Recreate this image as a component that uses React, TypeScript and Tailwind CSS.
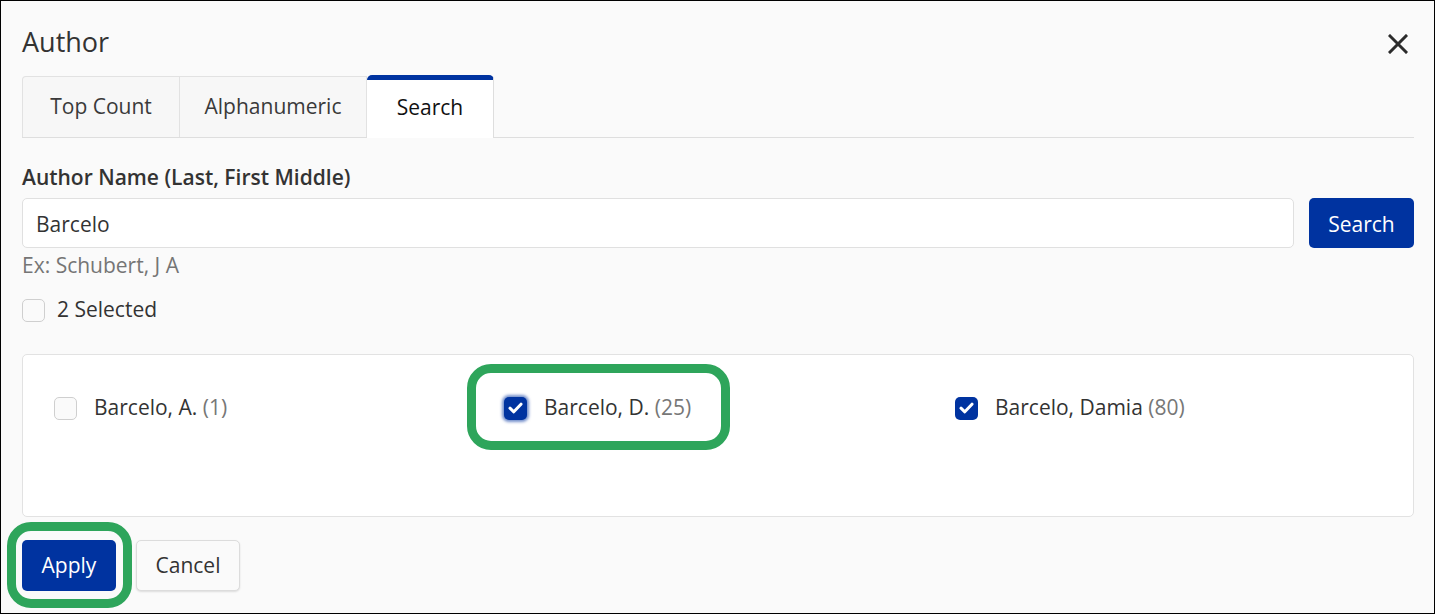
import React from 'react';

const font = { fontFamily: '"Open Sans", "Noto Sans", sans-serif' };

type Author = { name: string; count: number; checked: boolean; focused?: boolean };

const authors: Author[] = [
  { name: 'Barcelo, A.', count: 1, checked: false },
  { name: 'Barcelo, D.', count: 25, checked: true, focused: true },
  { name: 'Barcelo, Damia', count: 80, checked: true },
];

function Checkbox({ checked, focused }: { checked: boolean; focused?: boolean }) {
  if (!checked) {
    return <span className="block h-[23px] w-[23px] shrink-0 rounded-[5px] border border-[#cfcfcf] bg-[#fafafa]" />;
  }
  return (
    <span
      className={`flex h-[23px] w-[23px] shrink-0 items-center justify-center rounded-[5px] bg-[#0033a0] ${
        focused ? 'shadow-[0_0_3px_2px_rgba(0,51,160,0.55)]' : ''
      }`}
    >
      <svg width="15" height="12" viewBox="0 0 15 12" fill="none">
        <path d="M2 6.2 L5.8 9.8 L13 2.2" stroke="white" strokeWidth="3" strokeLinecap="round" strokeLinejoin="round" />
      </svg>
    </span>
  );
}

export default function App() {
  return (
    <div
      style={font}
      className="relative box-border h-[614px] w-[1435px] overflow-hidden border border-black bg-[#fafafa] pl-[21px] pr-[20px] text-[#333]"
    >
      {/* header */}
      <div className="flex h-[74px] items-start justify-between pt-[22px]">
        <h1 className="text-[27px] leading-[38px] font-normal text-[#333]">Author</h1>
        <button className="mr-[6px] mt-[11px]">
          <svg width="20" height="20" viewBox="0 0 20 20">
            <path d="M2 2 L18 18 M18 2 L2 18" stroke="#2b2b2b" strokeWidth="3" strokeLinecap="square" />
          </svg>
        </button>
      </div>

      {/* tabs */}
      <div className="flex h-[63px] border-b border-[#dedede]">
        <div className="mt-[1px] flex w-[158px] items-center justify-center rounded-tl-[4px] border border-b-0 border-[#e2e2e2] bg-[#f7f7f7] text-[21px] text-[#3a3a3a]">
          Top Count
        </div>
        <div className="mt-[1px] flex w-[187px] items-center justify-center border-t border-r border-[#e2e2e2] bg-[#f7f7f7] text-[21px] text-[#3a3a3a]">
          Alphanumeric
        </div>
        <div className="relative -mb-px flex w-[127px] items-center justify-center rounded-t-[5px] border-t-[5px] border-r border-t-[#0033a0] border-r-[#dedede] bg-white pb-[3px] text-[21px] font-medium text-[#111]">
          Search
        </div>
      </div>

      {/* search form */}
      <label className="mt-[25px] block text-[21px] leading-[28px] font-semibold text-[#333]">
        Author Name (Last, First Middle)
      </label>
      <div className="mt-[7px] flex gap-[15px]">
        <div className="flex h-[50px] flex-1 items-center rounded-[5px] border border-[#e0e0e0] bg-white px-[13px] pt-[3px] text-[21px] text-[#333]">
          Barcelo
        </div>
        <button className="h-[50px] w-[105px] rounded-[5px] bg-[#0033a0] pt-[3px] text-[21px] text-white">Search</button>
      </div>
      <p className="mt-[4px] text-[21px] leading-[26px] text-[#757575]">Ex: Schubert, J A</p>

      <div className="mt-[20px] flex h-[24px] items-center gap-[12px]">
        <Checkbox checked={false} />
        <span className="text-[21px] text-[#333]">2 Selected</span>
      </div>

      {/* results */}
      <div className="mt-[32px] h-[163px] rounded-[5px] border border-[#e2e2e2] bg-white pl-[31px] pt-[41px]">
        <div className="grid grid-cols-[450px_451px_450px]">
          {authors.map((a) => (
            <div key={a.name} className="flex h-[24px] items-center gap-[17px] text-[21px]">
              <Checkbox checked={a.checked} focused={a.focused} />
              <span className="text-[#333]">
                {a.name} <span className="text-[#777]">({a.count})</span>
              </span>
            </div>
          ))}
        </div>
      </div>

      {/* actions */}
      <div className="mt-[23px] flex items-center gap-[20px]">
        <button className="h-[51px] w-[94px] rounded-[5px] bg-[#0033a0] text-[21px] text-white">Apply</button>
        <button className="h-[51px] w-[104px] rounded-[5px] border border-[#dcdcdc] bg-[#fafafa] text-[21px] text-[#333] shadow-[0_1px_2px_rgba(0,0,0,0.12)]">
          Cancel
        </button>
      </div>

      {/* annotation highlights */}
      <div className="pointer-events-none absolute left-[466px] top-[363px] h-[86px] w-[263px] rounded-[24px] border-[9px] border-[#2ea55b]" />
      <div className="pointer-events-none absolute left-[6px] top-[521px] h-[86px] w-[125px] rounded-[24px] border-[9px] border-[#2ea55b]" />
    </div>
  );
}
